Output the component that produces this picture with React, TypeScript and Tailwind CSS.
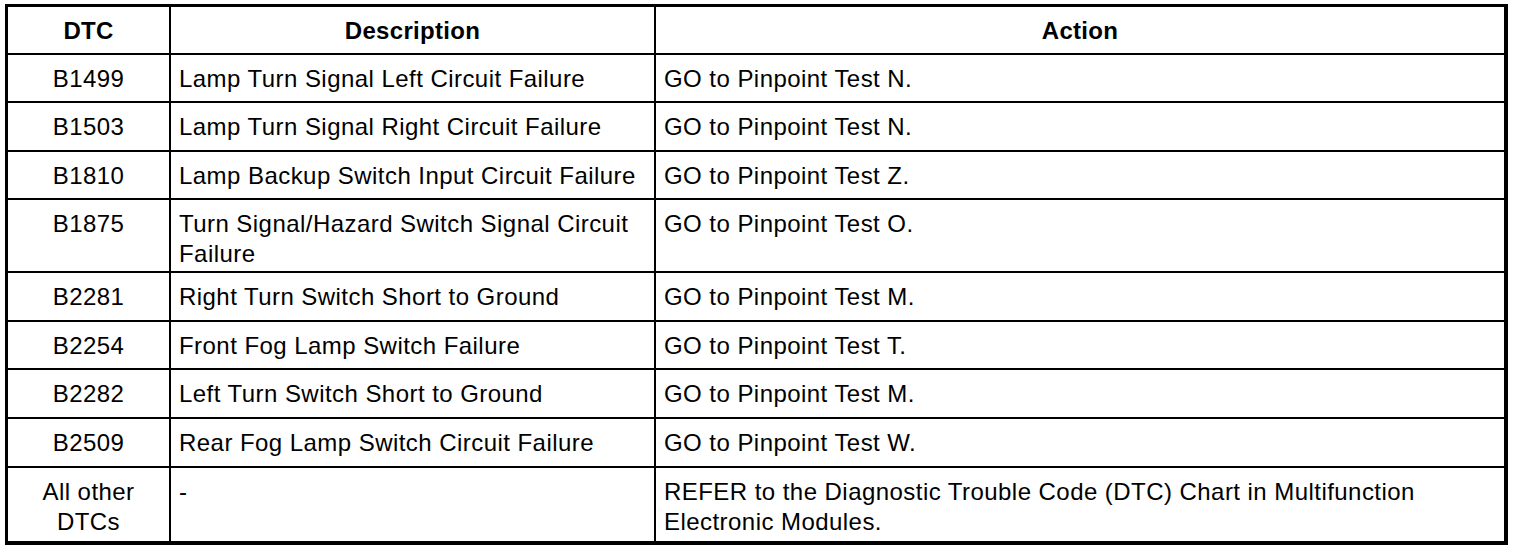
import React from "react";

type Row = { code: React.ReactNode; desc: React.ReactNode; action: React.ReactNode; h: string };

const rows: Row[] = [
  { code: "B1499", desc: "Lamp Turn Signal Left Circuit Failure", action: "GO to Pinpoint Test N.", h: "h-[48px]" },
  { code: "B1503", desc: "Lamp Turn Signal Right Circuit Failure", action: "GO to Pinpoint Test N.", h: "h-[49px]" },
  { code: "B1810", desc: "Lamp Backup Switch Input Circuit Failure", action: "GO to Pinpoint Test Z.", h: "h-[48px]" },
  {
    code: "B1875",
    desc: (
      <>
        Turn Signal/Hazard Switch Signal Circuit
        <br />
        Failure
      </>
    ),
    action: "GO to Pinpoint Test O.",
    h: "h-[73px]",
  },
  { code: "B2281", desc: "Right Turn Switch Short to Ground", action: "GO to Pinpoint Test M.", h: "h-[49px]" },
  { code: "B2254", desc: "Front Fog Lamp Switch Failure", action: "GO to Pinpoint Test T.", h: "h-[48px]" },
  { code: "B2282", desc: "Left Turn Switch Short to Ground", action: "GO to Pinpoint Test M.", h: "h-[49px]" },
  { code: "B2509", desc: "Rear Fog Lamp Switch Circuit Failure", action: "GO to Pinpoint Test W.", h: "h-[49px]" },
  {
    code: (
      <>
        All other
        <br />
        DTCs
      </>
    ),
    desc: "-",
    action: (
      <>
        REFER to the Diagnostic Trouble Code (DTC) Chart in Multifunction
        <br />
        Electronic Modules.
      </>
    ),
    h: "h-[73px]",
  },
];

export default function App() {
  return (
    <div className="w-[1520px] h-[552px] bg-white pt-[4px] pl-[5px] text-black font-['Liberation_Sans',Arial,sans-serif]">
      <div className="w-[1503px] border-t-[3px] border-l-[3px] border-r-4 border-b-4 border-black grid grid-cols-[163px_485px_848px]">
        <div className="h-[48px] pt-[2px] border-b-2 border-r-2 border-black flex items-center justify-center font-bold text-[24px] tracking-[0.3px]">DTC</div>
        <div className="h-[48px] pt-[2px] border-b-2 border-r-2 border-black flex items-center justify-center font-bold text-[24px] tracking-[0.3px]">Description</div>
        <div className="h-[48px] pt-[2px] border-b-2 border-black flex items-center justify-center font-bold text-[24px] tracking-[0.3px]">Action</div>
        {rows.map((r, i) => {
          const last = i === rows.length - 1;
          const b = last ? "" : "border-b-2";
          return (
            <React.Fragment key={i}>
              <div className={`${r.h} ${b} border-r-2 border-black pt-[9px] text-center text-[24px] tracking-[0.45px] leading-[30px]`}>{r.code}</div>
              <div className={`${r.h} ${b} border-r-2 border-black pt-[9px] px-[8px] text-[24px] tracking-[0.45px] leading-[30px]`}>{r.desc}</div>
              <div className={`${r.h} ${b} border-black pt-[9px] px-[8px] text-[24px] tracking-[0.45px] leading-[30px]`}>{r.action}</div>
            </React.Fragment>
          );
        })}
      </div>
    </div>
  );
}
